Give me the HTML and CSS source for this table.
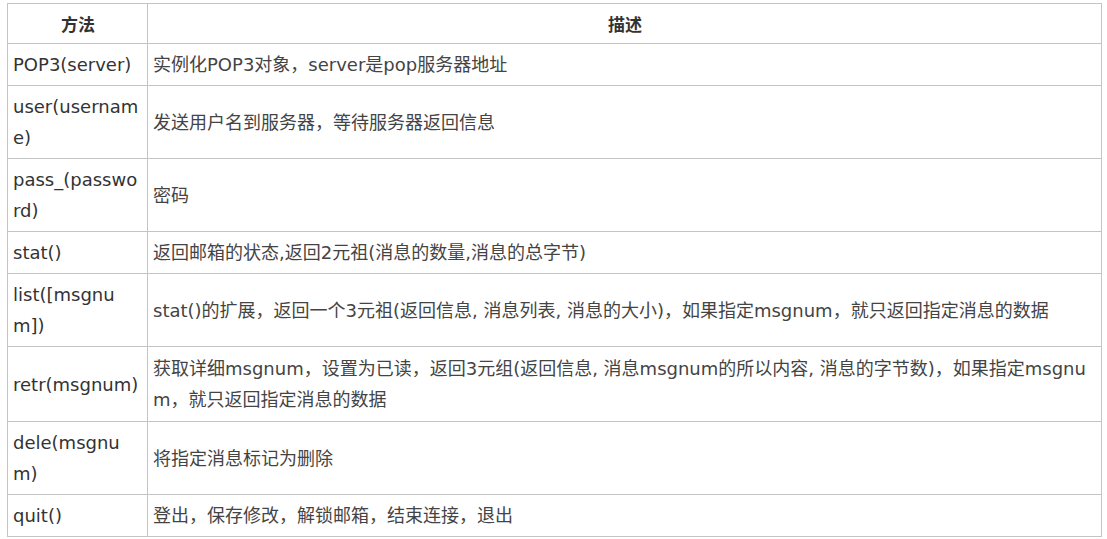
FILE: index.html
```html
<!DOCTYPE html>
<html>
<head>
    <meta charset="UTF-8">
    <title>POP3 方法</title>
    <link rel="stylesheet" href="styles.css">
</head>
<body>
    <table class="api">
        <colgroup>
            <col class="c-method">
            <col class="c-desc">
        </colgroup>
        <thead>
            <tr><th>方法</th><th>描述</th></tr>
        </thead>
        <tbody>
            <tr><td class="m">POP3(server)</td><td>实例化POP3对象，server是pop服务器地址</td></tr>
            <tr><td class="m">user(usernam<br>e)</td><td>发送用户名到服务器，等待服务器返回信息</td></tr>
            <tr><td class="m">pass_(passwo<br>rd)</td><td>密码</td></tr>
            <tr><td class="m">stat()</td><td>返回邮箱的状态,返回2元祖(消息的数量,消息的总字节)</td></tr>
            <tr><td class="m">list([msgnu<br>m])</td><td>stat()的扩展，返回一个3元祖(返回信息, 消息列表, 消息的大小)，如果指定msgnum，就只返回指定消息的数据</td></tr>
            <tr class="tall"><td class="m">retr(msgnum)</td><td>获取详细msgnum，设置为已读，返回3元组(返回信息, 消息msgnum的所以内容, 消息的字节数)，如果指定msgnu<br>m，就只返回指定消息的数据</td></tr>
            <tr><td class="m">dele(msgnu<br>m)</td><td>将指定消息标记为删除</td></tr>
            <tr><td class="m">quit()</td><td>登出，保存修改，解锁邮箱，结束连接，退出</td></tr>
        </tbody>
    </table>
</body>
</html>
```

FILE: styles.css
```css
html{background-color: #ffffff;}
body{margin: 0; padding: 3px 0 0 7px; font: 18px "DejaVu Sans", "Noto Sans CJK SC", sans-serif; color: #333333;}

.api{
    border-collapse: collapse;
    table-layout: fixed;
    width: 1095px;
}
.c-method{width: 140px;}

.api th, .api td{
    border: 1px solid #c4c4c4;
    padding: 5px 4px 5px 5px;
    vertical-align: middle;
    text-align: left;
}
.api th{
    font-family: "Noto Sans CJK SC", sans-serif;
    font-size: 17px;
    font-weight: bold;
    line-height: 31px;
    text-align: center;
    padding-top: 4px;
    padding-bottom: 4px;
    color: #333333;
}
.api td{color: #444444; line-height: 31px;}
.api td.m{white-space: nowrap; color: #333333;}
.api tr.tall td{padding-top: 6px; padding-bottom: 6px;}
```
